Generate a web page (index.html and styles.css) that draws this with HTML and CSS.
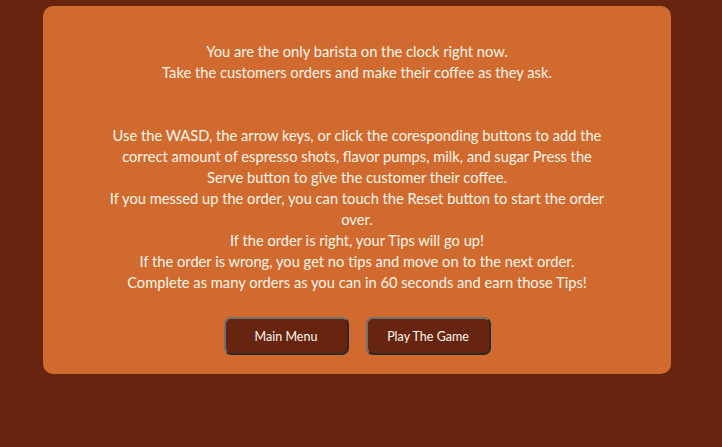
FILE: index.html
```html
<!DOCTYPE html>
<html>
<head>
<meta charset="utf-8">
<link rel="stylesheet" href="styles.css">
</head>
<body>
<div class="panel">
  <p class="intro">You are the only barista on the clock right now.<br>Take the customers orders and make their coffee as they ask.</p>
  <p class="rules">Use the WASD, the arrow keys, or click the coresponding buttons to add the<br>correct amount of espresso shots, flavor pumps, milk, and sugar Press the<br>Serve button to give the customer their coffee.<br>If you messed up the order, you can touch the Reset button to start the order<br>over.<br>If the order is right, your Tips will go up!<br>If the order is wrong, you get no tips and move on to the next order.<br>Complete as many orders as you can in 60 seconds and earn those Tips!</p>
  <div class="actions">
    <button class="btn">Main Menu</button>
    <button class="btn">Play The Game</button>
  </div>
</div>
</body>
</html>
```
FILE: styles.css
```css
html, body {
  margin: 0;
  padding: 0;
}
body {
  background: #67250f;
  height: 447px;
  font-family: "Lato", "Open Sans", sans-serif;
  color: #fff6ea;
}
.panel {
  width: 628px;
  box-sizing: border-box;
  margin: 6px 0 0 43px;
  background: #d16a2e;
  border-radius: 10px;
  padding: 35px 20px 19px;
  display: flex;
  flex-direction: column;
  align-items: center;
}
.intro, .rules {
  margin: 0;
  text-align: center;
  font-size: 14.7px;
  line-height: 21px;
  white-space: nowrap;
}
.rules {
  margin-top: 42px;
}
.actions {
  margin-top: 24px;
  display: flex;
  gap: 17px;
}
.btn {
  width: 125px;
  height: 38px;
  background: #67250f;
  color: #fff6ea;
  font-family: "Lato", "Open Sans", sans-serif;
  font-size: 12.5px;
  border: 2px solid;
  border-color: #6f6f6f #2a2a2a #2a2a2a #6f6f6f;
  border-radius: 7px;
  padding: 0;
}
```
